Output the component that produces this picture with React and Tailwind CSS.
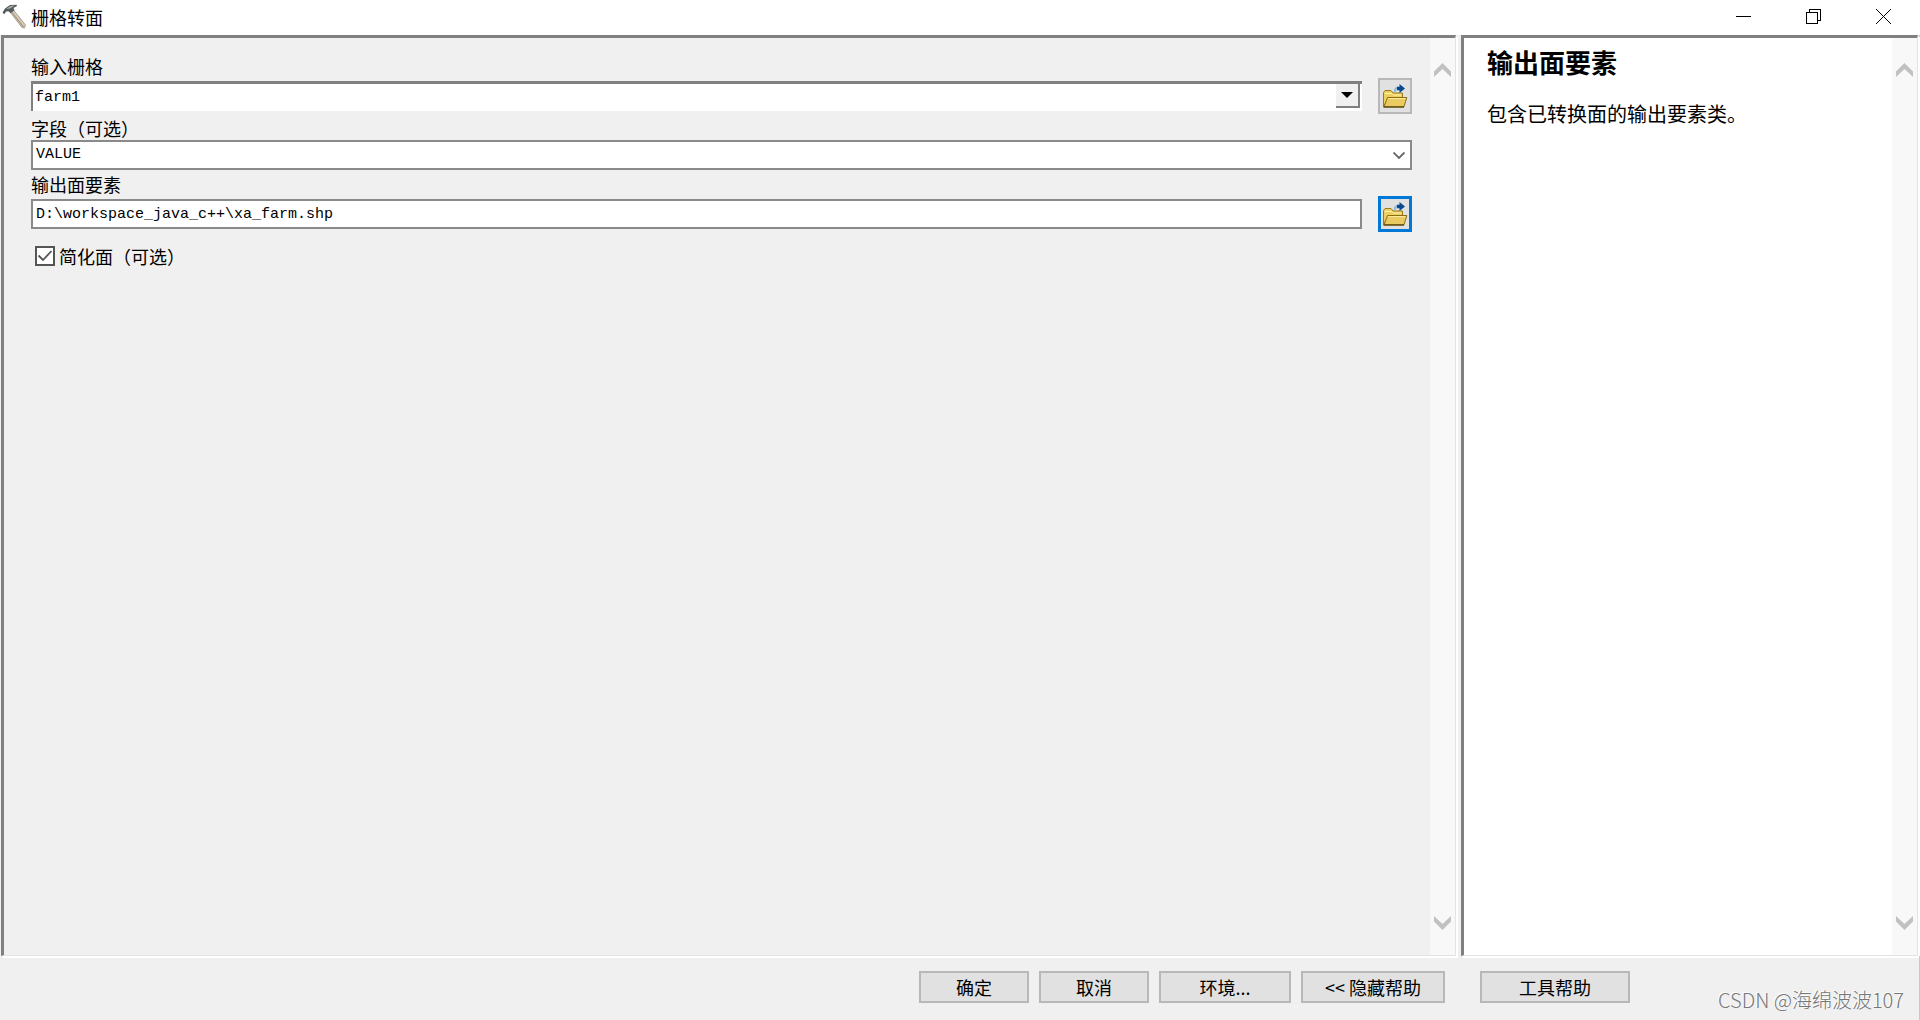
import React, { useState } from 'react';

const PANEL = 'flex min-w-0 border-t-[3px] border-l-[3px] border-r border-b border-t-[#808080] border-l-[#808080] border-r-[#e3e3e3] border-b-[#e3e3e3] shadow-[2px_2px_0_#ffffff]';
const LABEL = 'block w-fit text-[18px] leading-5 mb-0.5';
const FIELD_TEXT = "font-['Liberation_Mono','Noto_Sans_CJK_SC',monospace] text-[15px] leading-4 text-black";

function HammerIcon() {
  return (
    <svg viewBox="0 0 24 25" className="w-6 h-[25px] shrink-0" aria-hidden="true">
      <path d="M8.5 8.5 11.5 6 23.5 21 22.5 24 20 23.5Z" fill="#d8cbb8" stroke="#8f8778" strokeWidth="0.7" />
      <path d="M10 8.5 21.5 23" stroke="#a3917a" strokeWidth="1.2" />
      <path d="M0.5 8.5 3 4.5 8 1 14.5 0.8 15 2 11.5 4 12.5 6.2 8.5 9.2 6.5 7.2 4.2 7.5 2.2 10.2Z" fill="#555a5c" />
      <path d="M4 5 8.5 2 13 1.5 8 4.5Z" fill="#a9adae" />
    </svg>
  );
}

function FolderIcon() {
  return (
    <svg viewBox="0 0 26 24" className="w-[26px] h-6" aria-hidden="true">
      <path d="M1.5 22.5V8.5L3 6.5H9L11 9H20.5V14H7Z" fill="#edd05e" stroke="#9a7a1c" />
      <path d="M3 9.5H10L11.5 11H19" fill="none" stroke="#fff3ae" />
      <path d="M2 22.8 5.5 13.5H24.8L22 22.8Z" fill="#e9cb61" stroke="#8c6d14" />
      <path d="M6.4 14.6H23.4" stroke="#fff0a0" />
      <path d="M1.5 23H22" stroke="#5f4b10" strokeWidth="1.4" />
      <path d="M13 8C12.5 4.5 14.5 3.5 17.5 4" fill="none" stroke="#8bb9df" strokeWidth="2.2" />
      <path d="M15 2.8H17.5V0L23 4.5 17.5 9V6.2H15Z" fill="#084a8c" />
    </svg>
  );
}

function BrowseButton({ label, focused }) {
  return (
    <button
      aria-label={label}
      className={
        focused
          ? 'flex items-center justify-center w-[34px] h-9 shrink-0 bg-[#e1e1e1] border-[3px] border-[#0078d7]'
          : 'flex items-center justify-center w-[34px] h-9 shrink-0 bg-[#e1e1e1] border-2 border-[#b8b8b8]'
      }
    >
      <FolderIcon />
    </button>
  );
}

function ScrollBar() {
  return (
    <div className="flex flex-col justify-between items-center w-[25px] shrink-0 bg-[#f8f8f8] py-[25px]">
      <button aria-label="向上滚动">
        <svg viewBox="0 0 17 14" className="block w-[17px] h-3.5">
          <path d="M0 8.5 8.5 0 17 8.5V14L8.5 6 0 14Z" fill="#c1c1c1" />
        </svg>
      </button>
      <button aria-label="向下滚动">
        <svg viewBox="0 0 17 14" className="block w-[17px] h-3.5">
          <path d="M0 5.5 8.5 14 17 5.5V0L8.5 8 0 0Z" fill="#c1c1c1" />
        </svg>
      </button>
    </div>
  );
}

function TitleBar() {
  return (
    <header className="flex items-center justify-between h-[35px] shrink-0 bg-white pl-0.5 pr-0.5 pb-0.5">
      <div className="flex items-center gap-[5px]">
        <HammerIcon />
        <h1 className="text-[18px] leading-5">栅格转面</h1>
      </div>
      <div className="flex h-full">
        <button aria-label="最小化" className="flex items-center justify-center w-[70px]">
          <svg viewBox="0 0 15 15" className="w-[15px] h-[15px]" shapeRendering="crispEdges">
            <path d="M0 7.5H15" stroke="#000" />
          </svg>
        </button>
        <button aria-label="还原" className="flex items-center justify-center w-[70px]">
          <svg viewBox="0 0 15 15" className="w-[15px] h-[15px]" fill="none" stroke="#000" shapeRendering="crispEdges">
            <path d="M0.5 3.5H11.5V14.5H0.5Z" />
            <path d="M3.5 3.5V0.5H14.5V11.5H11.5" />
          </svg>
        </button>
        <button aria-label="关闭" className="flex items-center justify-center w-[70px]">
          <svg viewBox="0 0 15 15" className="w-[15px] h-[15px]" stroke="#000">
            <path d="M0 0 15 15M15 0 0 15" />
          </svg>
        </button>
      </div>
    </header>
  );
}

function DialogButton({ className, children }) {
  return (
    <button className={`h-8 bg-[#e1e1e1] border-2 border-[#b8b8b8] text-[18px] leading-5 ${className}`}>
      {children}
    </button>
  );
}

export default function App() {
  const [raster, setRaster] = useState('farm1');
  const [field, setField] = useState('VALUE');
  const [output, setOutput] = useState('D:\\workspace_java_c++\\xa_farm.shp');
  const [simplify, setSimplify] = useState(true);

  return (
    <div className="relative min-h-screen flex flex-col bg-[#f0f0f0] text-black font-['Noto_Sans_CJK_SC',sans-serif]">
      <TitleBar />

      <div className="flex-1 flex gap-[5px] pl-px pr-px border-r border-[#c8c8c8]">
        {/* Parameters */}
        <main className={`${PANEL} flex-1`}>
          <form className="flex-1 min-w-0 pt-[18px] pl-[27px] pr-[18px]" onSubmit={(e) => e.preventDefault()}>
            <label htmlFor="raster" className={LABEL}>输入栅格</label>
            <div className="flex items-center gap-4">
              <div className="relative flex-1">
                <select
                  id="raster"
                  value={raster}
                  onChange={(e) => setRaster(e.target.value)}
                  className={`block appearance-none w-full h-[30px] pl-0.5 bg-white border-t-[3px] border-l-2 border-t-[#808080] border-l-[#808080] ${FIELD_TEXT}`}
                >
                  <option>farm1</option>
                </select>
                <span className="absolute top-[3px] right-0.5 flex items-center justify-center w-6 h-6 bg-[#f0f0f0] border-r-2 border-b-2 border-[#808080] pointer-events-none">
                  <svg viewBox="0 0 12 6" className="w-3 h-1.5">
                    <path d="M0 0H12L6 6Z" fill="#000" />
                  </svg>
                </span>
              </div>
              <BrowseButton label="浏览输入栅格" />
            </div>

            <label htmlFor="field" className={`${LABEL} mt-1`}>字段（可选）</label>
            <div className="relative">
              <select
                id="field"
                value={field}
                onChange={(e) => setField(e.target.value)}
                className={`block appearance-none w-full h-[30px] pl-[3px] bg-white border-2 border-[#8a8a8a] ${FIELD_TEXT}`}
              >
                <option>VALUE</option>
              </select>
              <svg viewBox="0 0 12 7" className="absolute right-[7px] top-3 w-3 h-[7px] pointer-events-none">
                <path d="M0.5 0.5 6 6 11.5 0.5" fill="none" stroke="#666" strokeWidth="1.8" />
              </svg>
            </div>

            <label htmlFor="output" className={`${LABEL} mt-1`}>输出面要素</label>
            <div className="flex items-center gap-4">
              <input
                id="output"
                type="text"
                value={output}
                onChange={(e) => setOutput(e.target.value)}
                className={`flex-1 min-w-0 h-[30px] pl-[3px] bg-white border-2 border-[#8a8a8a] outline-none ${FIELD_TEXT}`}
              />
              <BrowseButton label="浏览输出面要素" focused />
            </div>

            <div className="flex items-center mt-3.5 pl-1 gap-1">
              <span className="grid">
                <input
                  id="simplify"
                  type="checkbox"
                  checked={simplify}
                  onChange={(e) => setSimplify(e.target.checked)}
                  className="peer appearance-none col-start-1 row-start-1 w-5 h-5 bg-white border-2 border-[#555]"
                />
                <svg viewBox="0 0 20 20" className="col-start-1 row-start-1 w-5 h-5 invisible peer-checked:visible pointer-events-none">
                  <path d="M3.5 9.5 8 14 16.5 5" fill="none" stroke="#555" strokeWidth="1.8" />
                </svg>
              </span>
              <label htmlFor="simplify" className="text-[18px] leading-5">简化面（可选）</label>
            </div>
          </form>
          <ScrollBar />
        </main>

        {/* Help */}
        <aside className={`${PANEL} w-[457px] shrink-0 bg-white`}>
          <div className="flex-1 pt-2 pl-[23px]">
            <h2 className="text-[26px] leading-8 font-bold">输出面要素</h2>
            <p className="mt-6 text-[20px] leading-6">包含已转换面的输出要素类。</p>
          </div>
          <ScrollBar />
        </aside>
      </div>

      <footer className="flex h-16 shrink-0 pt-[15px] border-r border-[#c8c8c8]">
        <div className="flex-1 flex justify-end gap-2.5 pr-4">
          <DialogButton className="w-[110px]">确定</DialogButton>
          <DialogButton className="w-[110px]">取消</DialogButton>
          <DialogButton className="w-[132px]">环境...</DialogButton>
          <DialogButton className="w-[144px]">&lt;&lt; 隐藏帮助</DialogButton>
        </div>
        <div className="w-[458px] shrink-0 pl-[19px]">
          <DialogButton className="w-[150px]">工具帮助</DialogButton>
        </div>
      </footer>

      <div className="absolute right-4 bottom-2 text-[20px] leading-6 text-[#777] font-light [text-shadow:-1px_-1px_0_#fff] pointer-events-none">
        CSDN @海绵波波107
      </div>
    </div>
  );
}
